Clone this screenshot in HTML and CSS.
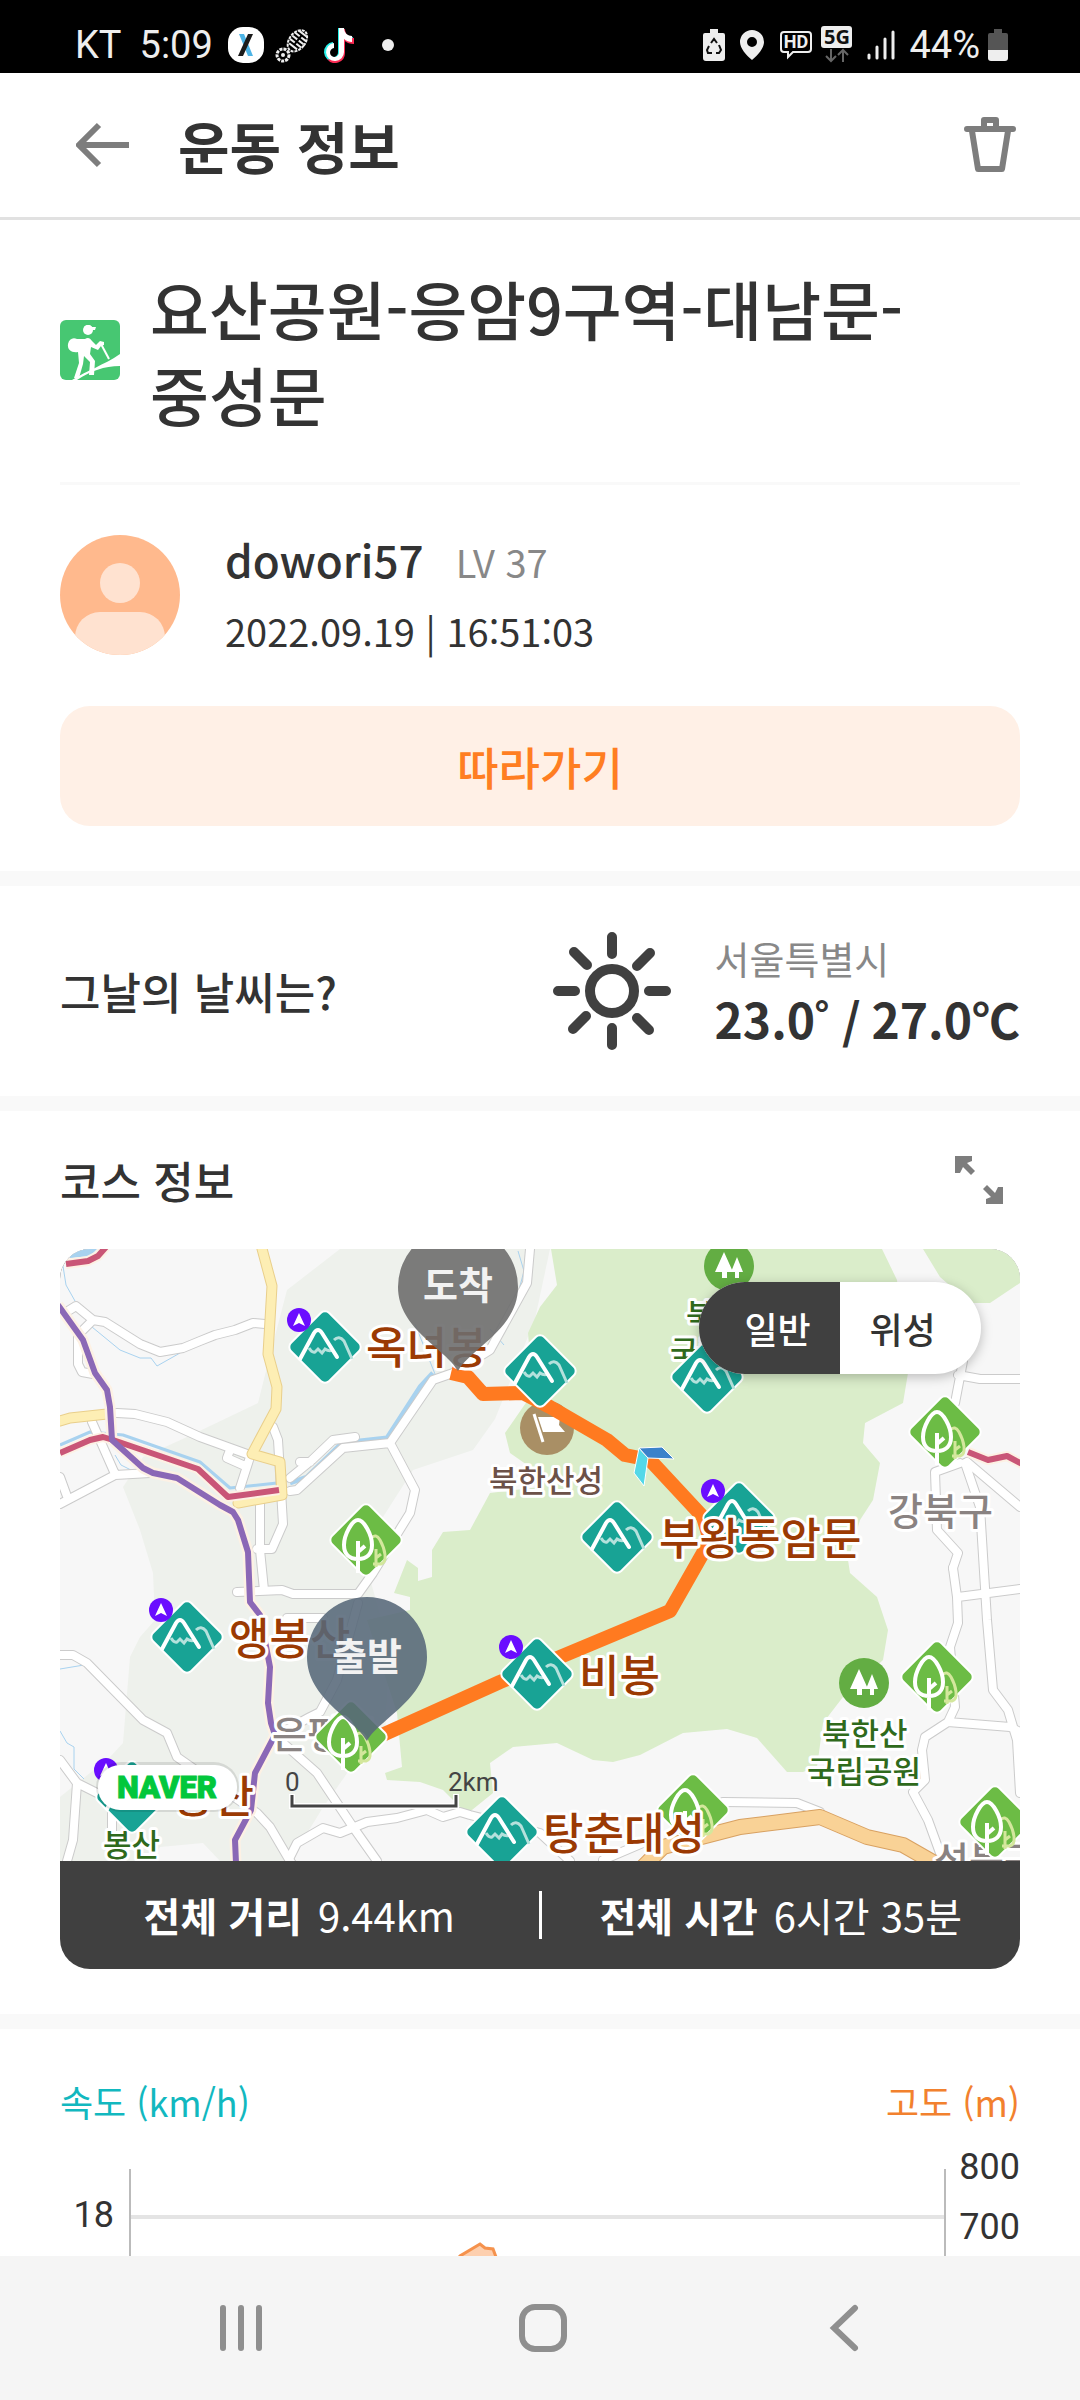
FILE: index.html
```html
<!DOCTYPE html>
<html lang="ko">
	<head>
		<meta charset="UTF-8">
		<meta name="viewport" content="width=device-width, initial-scale=1">
		<title>운동 정보</title>
		<link rel="stylesheet" href="styles.css">
	</head>
	<body>
		<div class="statusbar">
			<div class="status-left">
				<span>KT</span>
				<span class="time">5:09</span>
				<svg width="36" height="36" viewBox="0 0 36 36">
					<rect width="36" height="36" rx="15" fill="#fff"/>
					<path d="M11 7h5l9 22h-5z" fill="#4db4e6"/>
					<path d="M20 7h5L15 29h-5z" fill="#1b1b1b"/>
				</svg>
				<svg width="36" height="36" viewBox="0 0 36 36">
					<g transform="rotate(38 23 13)" stroke="#eee" fill="none">
						<ellipse cx="23" cy="14" rx="8" ry="12" stroke-width="2" stroke-dasharray="3 1"/>
						<path d="M18 5h10M16 9h6M24 9h6M16 13h6M24 13h6M16 17h6M24 17h6M18 21h10" stroke-width="2"/>
					</g>
					<circle cx="8" cy="28" r="6" fill="none" stroke="#eee" stroke-width="3" stroke-dasharray="3 1"/>
					<circle cx="8" cy="28" r="2" fill="#eee"/>
				</svg>
				<svg width="33" height="36" viewBox="0 0 33 36">
					<path d="M16 1h6c0 5 4 9 9 9v6c-4 0-7-1-9-3v12a10 10 0 1 1-11-10v6a4.500 4.500 0 1 0 5 4z" fill="#26f0ea"/>
					<path d="M18 2h5c0 5 4 9 9 9v6c-4 0-7-1-9-3v12a10 10 0 0 1-18 6c9 2 13-2 13-6z" fill="#fb2c54"/>
					<path d="M17 1h5c0 5 4 8 8 8v6c-3 0-6-1-8-3v13a9 9 0 1 1-10-9v5a4.500 4.500 0 1 0 5 4z" fill="#fff"/>
				</svg>
				<svg class="more" width="12" height="12" viewBox="0 0 12 12"><circle cx="6" cy="6" r="6" fill="#eee"/></svg>
			</div>
			<div class="status-right">
				<svg width="22" height="32" viewBox="0 0 22 32">
					<path d="M7 0h8v4h5a2 2 0 0 1 2 2v23a3 3 0 0 1-3 3H3a3 3 0 0 1-3-3V6a2 2 0 0 1 2-2h5z" fill="#eee"/>
					<path d="M8 14l3-4 3 4M16 16l2 5-2 3h-3M9 24H5l-1-3 2-4" fill="none" stroke="#111" stroke-width="2"/>
				</svg>
				<svg width="26" height="32" viewBox="0 0 26 32">
					<path d="M13 1a12 12 0 0 1 12 12c0 6-6 13-12 18C7 26 1 19 1 13A12 12 0 0 1 13 1zm0 7a5 5 0 1 0 0 10 5 5 0 0 0 0-10z" fill="#eee"/>
				</svg>
				<svg width="34" height="30" viewBox="0 0 34 30">
					<path d="M5 2h24a3 3 0 0 1 3 3v14a3 3 0 0 1-3 3H14l-5 5v-5H5a3 3 0 0 1-3-3V5a3 3 0 0 1 3-3z" fill="none" stroke="#eee" stroke-width="2"/>
					<text class="hd" x="17" y="18" text-anchor="middle">HD</text>
				</svg>
				<svg class="five" width="32" height="38" viewBox="0 0 32 38">
					<rect width="31" height="22" rx="3" fill="#eee"/>
					<text class="fiveg" x="16" y="18" text-anchor="middle">5G</text>
					<path d="M10 23v12M5 30l5 5 5-5M22 36V24M17 29l5-5 5 5" fill="none" stroke="#666" stroke-width="2"/>
				</svg>
				<svg width="28" height="30" viewBox="0 0 28 30">
					<path d="M2 25v3M10 17v11M18 9v19M26 2v26" stroke="#eee" stroke-width="3" stroke-linecap="round"/>
				</svg>
				<span>44%</span>
				<svg class="batt" width="20" height="32" viewBox="0 0 20 32">
					<path d="M6 0h8v4h4a2 2 0 0 1 2 2v15H0V6a2 2 0 0 1 2-2h4z" fill="#555"/>
					<path d="M0 21h20v8a3 3 0 0 1-3 3H3a3 3 0 0 1-3-3z" fill="#eee"/>
				</svg>
			</div>
		</div>

		<header class="header">
			<button class="iconbtn" aria-label="뒤로">
				<svg width="54" height="46" viewBox="0 0 54 46">
					<path d="M23 3L3 23l20 20M3 23h50" fill="none" stroke="#7d7d7d" stroke-width="6"/>
				</svg>
			</button>
			<h1>운동 정보</h1>
			<button class="iconbtn trash" aria-label="삭제">
				<svg width="52" height="56" viewBox="0 0 52 56">
					<g fill="none" stroke="#7d7d7d" stroke-width="6" stroke-linejoin="round" stroke-linecap="round">
						<path d="M3 12h46M20 11V3h12v8M8 14l6 38h24l6-38"/>
					</g>
				</svg>
			</button>
		</header>

		<main class="content">
			<section class="summary">
				<div class="coursename">
					<svg width="60" height="60" viewBox="0 0 60 60">
						<rect width="60" height="60" rx="6" fill="#47c772"/>
						<circle cx="28" cy="10" r="5" fill="#fff"/>
						<path d="M24 7c3-3 7-2 8 0h4l-1 3h-5z" fill="#fff"/>
						<path d="M25 19c3-2 5-1 7 2l4 4 4-4 4 1v3l-3 1-3 4-7-3-1 7 5 7-1 14h-5l1-13-6-6-1 8-4 14h-5l5-15-1-11c-6 1-11-2-10-8 1-5 5-7 9-5 3 0 5 0 8 0z" fill="#fff"/>
						<path d="M41 24l8 15" stroke="#fff" stroke-width="2"/>
						<path d="M12 60c8-5 16-9 23-12 9-5 17-8 25-14v12c-16 0-29 5-43 14z" fill="#fff"/>
					</svg>
					<h2>요산공원-응암9구역-대남문-중성문</h2>
				</div>
				<div class="profile">
					<svg width="120" height="120" viewBox="0 0 120 120">
						<clipPath id="face"><circle cx="60" cy="60" r="60"/></clipPath>
						<g clip-path="url(#face)">
							<rect width="120" height="120" fill="#ffb98d"/>
							<circle cx="60" cy="48" r="20" fill="#ffe2d0"/>
							<rect x="15" y="77" width="90" height="60" rx="25" fill="#ffe2d0"/>
						</g>
					</svg>
					<div class="who">
						<p><span class="name">dowori57</span><span class="level">LV 37</span></p>
						<p class="date">2022.09.19 | 16:51:03</p>
					</div>
				</div>
				<button class="follow">따라가기</button>
			</section>

			<section class="weather">
				<h3>그날의 날씨는?</h3>
				<svg width="118" height="118" viewBox="0 0 118 118">
					<g fill="none" stroke="#404040" stroke-width="10" stroke-linecap="round">
						<circle cx="59" cy="59" r="22"/>
						<path d="M59 5v17M59 96v17M5 59h17M96 59h17M21 20l13 13M97 21L84 34M20 97l13-13M96 98L84 86"/>
					</g>
				</svg>
				<div class="degree">
					<p class="city">서울특별시</p>
					<p class="temp">23.0˚ / 27.0℃</p>
				</div>
			</section>

			<section class="course">
				<div class="coursehead">
					<h3>코스 정보</h3>
					<button class="iconbtn" aria-label="크게 보기">
						<svg width="50" height="50" viewBox="0 0 50 50">
							<path d="M1 1h17v5l-5 2 8 8-4 4-8-8-3 6H1zM49 49H32v-5l5-2-8-8 4-4 8 8 3-6h5z" fill="#7d7d7d"/>
						</svg>
					</button>
				</div>
				<div class="card">
					<svg class="map" viewBox="0 0 960 612" role="img" aria-label="코스 지도">
						<defs>
							<g id="mountain">
								<rect x="-27" y="-27" width="54" height="54" rx="6" transform="rotate(45)" fill="#18a395" stroke="#fff" stroke-width="2"/>
								<path d="M-16 1q3 5 6 4l3-3 4 4 3-4q4 3 8 1M9-7q5-5 10 1l8 18" fill="none" stroke="#b5e1dc" stroke-width="3"/>
								<path d="M-25 12L-11-14q4-6 8 0L12 10" fill="none" stroke="#fff" stroke-width="4" stroke-linecap="round"/>
							</g>
							<g id="badge">
								<circle cx="-26" cy="-27" r="12" fill="#6a0dff"/>
								<path d="M-26-34l6 13-6-3-6 3z" fill="#fff"/>
							</g>
							<g id="tree">
								<rect x="-27" y="-27" width="54" height="54" rx="6" transform="rotate(45)" fill="#6cbc45" stroke="#fff" stroke-width="2"/>
								<path d="M5-2q5-5 9 2c5 9 8 22 1 24h-8M10 9v18M10 18l5-4" fill="none" stroke="#d3e79c" stroke-width="3"/>
								<path d="M-8-20c-6 0-14 15-14 25 0 9 5 14 14 14S6 14 6 5c0-10-8-25-14-25zM-8 1v32M-8 12l7-6" fill="none" stroke="#fff" stroke-width="4"/>
							</g>
							<g id="park">
								<circle r="25" fill="#63ad43"/>
								<path d="M-5-14l9 20h-6v6h-5V6h-7zM8-9L14 6h-4v6H6V6H2z" fill="#fff"/>
							</g>
							<!-- white roads, drawn twice: casing and fill -->
							<g id="roads">
								<path d="M8 62l8-5 17 14 12 2 35 22 20 8 23-4 17-7 15-6 20-5 18-7 12 1M33 71L20 84M18 85v30l4 8 11 2"/>
								<path d="M57 164l18 1 32 8 33 15 47 17M32 173l23 52M0 255l55-29 35-2M0 228l8 22"/>
								<path d="M170 201l-3 8 18 8M190 208l-10 31M213 178l5 13 5 84-11 25h-15M200 251v50l4 40"/>
								<path d="M177 343l45-2 11 4h65l15-21 37-60 5-23-25-47 43-63 20-7 37-23 37-67 3-34M330 194l-47 5-46 42-7 1M230 229l22-18 21-20 22-3M240 213l10 0"/>
								<path d="M0 406h13l14 8 56 57 24 13 10 24 80 56 13 14 20 34 12 16M0 511l17 23 20 10M17 534l-4 57-6 21M52 564v30"/>
								<path d="M217 486l33-18 10-5 17-32 21-77M223 494l34 30 36 54 24 34M230 608l7-14 26-15 17 5 27-11 30-4 30-8 16 7 17-5 10 3 70 18 30 28M227 369h36M543 611l54-23"/>
								<path d="M663 553l74 1 23 9M893 319l4 29 1 26-8 24 5 60-7 15-23 15-3 13 3 30-12 12 15 28 12 33M888 473l62 5 10 5M905 214l15 44 7 113 6 70 15 20 9 30 3 53M898 348l62-8"/>
								<path d="M903 112l-8 42M898 126l22 4h40M900 214l-25 9 2 58 21 23-5 15M907 213l53 45"/>
							</g>
							<path id="pin" d="M0 84C-12 62-60 42-60 0a60 60 0 0 1 120 0C60 42 12 62 0 84z"/>
						</defs>
						<rect width="960" height="612" fill="#f7f7f7"/>
						<path d="M280 0l-53 41-20 77-9 36-71 34-44 20-20 30 17 43 13 43 2 47-15 17-10 20-7 86-13 14-50 40v64h90l10-14 43-4 17 18h70l32-52 28-40 35-35 5-85-20-70 13-62 30-47 60-20 22-31 30-75 10-25 15-70z" fill="#eef1ec"/>
						<path d="M491 0l6 36-17 22-12 26 5 60-10 14-18 26 5 20 20 14 10 20-50 6-20 37-27 2-11 18v27l-14 4v-13l-11-8-13 33 16 4v13l-43 10 30 93 5 54-17 6 2 7 33 2 23 8 24 24 26-21-3-30 23-16 44-4 36 17 20 2 27-7 43-22 44-4 30 9 30 34h16l14-5 6-44 10-13 10-13 40-37 5-30-11-33-27-24-2-13 12-40 13-20 7-37-17-20 2-20 38-20 5-30-11-93-15-31zM863 0l17 28 30 26h20l30-20V0z" fill="#daedca"/>
						<g fill="none" stroke="#a8d2ef" stroke-linejoin="round">
							<path d="M230 234l17-6 33-32 20-4 27-3 33-51 13-14" stroke-width="5"/>
							<path d="M0 196l30-13 33 3 77 27 30 26 47-5" stroke-width="3"/>
							<path d="M32 78l28 23 20 8h11l6 8 23-13M3 17l3 19 9 16M55 206l6 10 12 6M0 420l24-4M0 482l7 12 7 4v22l10 10M458 2l6 20-8 30-12 30M355 75l20 50M430 80l14 16" stroke-width="1"/>
						</g>
						<path d="M10 0h27l-7 7-20 2z" fill="#a8d2ef"/>
						<g fill="none" stroke-linejoin="round" stroke-linecap="round">
							<use href="#roads" stroke="#cbcbcb" stroke-width="10"/>
							<use href="#roads" stroke="#fff" stroke-width="8"/>
							<path d="M0 172l10-3 37-4M201-4l11 41-4 68 9 33-1 22-24 45 28 8 2 33-44 8" stroke="#e9cf8b" stroke-width="11"/>
							<path d="M0 172l10-3 37-4M201-4l11 41-4 68 9 33-1 22-24 45 28 8 2 33-44 8" stroke="#fdeeb4" stroke-width="9"/>
							<path d="M583 618l20-20 77-20 80-10 47 20 36 8 35 20" stroke="#d8a162" stroke-width="16"/>
							<path d="M583 618l20-20 77-20 80-10 47 20 36 8 35 20" stroke="#f9d296" stroke-width="14"/>
						</g>
						<g fill="none" stroke-linejoin="round">
							<path d="M6 15l22-3 10-5 8-9M0 204l30-13 13-3 10 3 85 29 30 28 51-7M908 203l20 8 19-4 15 8" stroke="#fdf1e4" stroke-width="10"/>
							<path d="M-2 56l25 35 12 33 12 17 3 17 2 33 31 28 10 5 24 5 43 27 13 7 5 8 10 32 2 50 10 13 10 52-2 36 3 20 4 12-20 38-4 37-16 30 1 23" stroke="#fdf1e4" stroke-width="11"/>
							<path d="M6 15l22-3 10-5 8-9M0 204l30-13 13-3 10 3 85 29 30 28 51-7M908 203l20 8 19-4 15 8" stroke="#c95677" stroke-width="6"/>
							<path d="M-2 56l25 35 12 33 12 17 3 17 2 33 31 28 10 5 24 5 43 27 13 7 5 8 10 32 2 50 10 13 10 52-2 36 3 20 4 12-20 38-4 37-16 30 1 23" stroke="#8b68b6" stroke-width="6"/>
						</g>

						<use href="#park" x="669" y="17"/>
						<use href="#park" x="804" y="434"/>
						<circle cx="487" cy="179" r="27" fill="#a98f65"/>
						<path d="M474 165l9 28" stroke="#fff" stroke-width="3"/>
						<path d="M478 168h22l-1 8 6 7h-22z" fill="#fff"/>
						<g class="label place">
							<text x="828" y="276">강북구</text>
							<text x="212" y="499">은평구</text>
							<text x="874" y="625">성북구</text>
						</g>
						<g class="label green">
							<text x="626" y="77">북한산</text>
							<text x="610" y="114">국립공원</text>
							<text x="762" y="496">북한산</text>
							<text x="747" y="534">국립공원</text>
							<text x="43" y="607">봉산</text>
						</g>
						<text class="label fort" x="429" y="243">북한산성</text>
						<path d="M391 124l17 4 15 17 40-1 27 14 57 33 18 15 25 5 53 57 6 20-6 16-33 58-110 46-60 25-120 54" fill="none" stroke="#ff7a20" stroke-width="14" stroke-linejoin="round"/>
						<path d="M579 199l-5 25 10 13 4-28z" fill="#54d8e8" stroke="#fff"/>
						<path d="M579 199l23-1 12 12-26-1z" fill="#3b82cb" stroke="#fff"/>

						<use href="#mountain" x="265" y="98"/><use href="#badge" x="265" y="98"/>
						<use href="#mountain" x="480" y="122"/>
						<use href="#mountain" x="647" y="128"/>
						<use href="#mountain" x="679" y="269"/><use href="#badge" x="679" y="269"/>
						<use href="#mountain" x="557" y="288"/>
						<use href="#mountain" x="127" y="388"/><use href="#badge" x="127" y="388"/>
						<use href="#mountain" x="477" y="425"/><use href="#badge" x="477" y="425"/>
						<use href="#mountain" x="72" y="548"/><use href="#badge" x="72" y="548"/>
						<use href="#mountain" x="442" y="583"/>
						<use href="#tree" x="306" y="291"/>
						<use href="#tree" x="885" y="183"/>
						<use href="#tree" x="291" y="488"/>
						<use href="#tree" x="877" y="428"/>
						<use href="#tree" x="633" y="561"/>
						<use href="#tree" x="935" y="573"/>
						<g class="label peak">
							<text x="306" y="115">옥녀봉</text>
							<text x="599" y="306">부왕동암문</text>
							<text x="169" y="406">앵봉산</text>
							<text x="519" y="443">비봉</text>
							<text x="483" y="601">탕춘대성</text>
							<text x="113" y="564">봉산</text>
						</g>
						<use href="#pin" x="398" y="38" fill="#6e6e6e" fill-opacity=".9"/>
						<use href="#pin" x="307" y="408" fill="#566879" fill-opacity=".88"/>
						<text class="pintext" x="398" y="50" text-anchor="middle">도착</text>
						<text class="pintext" x="307" y="421" text-anchor="middle">출발</text>

						<path d="M232 545v12h164v-12" fill="none" stroke="#fff" stroke-width="6"/>
						<path d="M232 546v11h164v-11" fill="none" stroke="#444" stroke-width="3"/>
						<text class="scale" x="225" y="542">0</text>
						<text class="scale" x="388" y="542">2km</text>
						<rect x="36" y="513" width="143" height="50" rx="25" fill="#000" opacity=".1"/>
						<rect x="38" y="516" width="139" height="45" rx="22" fill="#fff"/>
						<text class="naver" x="107" y="549" text-anchor="middle">NAVER</text>
					</svg>
					<div class="toggle">
						<button class="current">일반</button>
						<button>위성</button>
					</div>
					<div class="totals">
						<p><b>전체 거리</b><span>9.44km</span></p>
						<p><b>전체 시간</b><span>6시간 35분</span></p>
					</div>
				</div>
			</section>

			<section class="chart">
				<div class="legend">
					<span class="speed">속도 (km/h)</span>
					<span class="height">고도 (m)</span>
				</div>
				<svg class="plot" viewBox="0 0 960 240" role="img" aria-label="속도와 고도 그래프">
					<path d="M70 91h815" stroke="#e4e4e4" stroke-width="4"/>
					<path d="M380 154l20-24 20-12 5 4 8 1 3 8 20 40v70h-76z" fill="#fdcfae"/>
					<path d="M380 154l20-24 20-12 5 4 8 1 3 8 20 40" fill="none" stroke="#f5924d" stroke-width="3"/>
					<path d="M70 43v197M885 43v197" stroke="#bbb" stroke-width="2"/>
					<text x="54" y="101" text-anchor="end">18</text>
					<text x="960" y="53" text-anchor="end">800</text>
					<text x="960" y="113" text-anchor="end">700</text>
				</svg>
			</section>
		</main>

		<nav class="navbar">
			<button class="iconbtn" aria-label="최근 앱">
				<svg width="48" height="48" viewBox="0 0 48 48">
					<path d="M6 4v40M24 4v40M42 4v40" stroke="#8f8f8f" stroke-width="6" stroke-linecap="round"/>
				</svg>
			</button>
			<button class="iconbtn" aria-label="홈">
				<svg width="48" height="48" viewBox="0 0 48 48">
					<rect x="3" y="3" width="42" height="42" rx="13" fill="none" stroke="#8f8f8f" stroke-width="6"/>
				</svg>
			</button>
			<button class="iconbtn" aria-label="이전">
				<svg width="48" height="48" viewBox="0 0 48 48">
					<path d="M34 4L13 24l21 20" fill="none" stroke="#8f8f8f" stroke-width="6" stroke-linecap="round"/>
				</svg>
			</button>
		</nav>
	</body>
</html>
```
FILE: styles.css
```css
*{box-sizing:border-box;}
body,h1,h2,h3,p{
	margin:0;
	padding:0;
}
body{
	display:flex;
	flex-direction:column;
	height:100vh;
	background-color:#fff;
	color:#333;
	font-family:"Noto Sans CJK KR",sans-serif;
}
svg{
	display:block;
	flex-shrink:0;
}
button{
	border:0;
	padding:0;
	background:none;
	color:inherit;
	font-family:inherit;
	cursor:pointer;
}

/* 상태바 */
.statusbar{
	display:flex;
	justify-content:space-between;
	height:73px;
	padding:15px 72px 0 75px;
	background-color:#000;
	color:#eee;
	font:38px/60px Roboto,sans-serif;
}
.status-left,.status-right{
	display:flex;
	align-items:center;
	height:60px;
}
.status-left{gap:11px;}
.status-left .time{margin:0 4px 0 7px;}
.status-left .more{margin-left:16px;}
.status-right{gap:14px;}
.status-right .five{margin-left:-6px;}
.status-right .batt{margin-left:-6px;}
.hd{
	font:bold 18px Roboto,sans-serif;
	fill:#eee;
}
.fiveg{
	font:bold 20px "Noto Sans",sans-serif;
	fill:#111;
}

/* 헤더 */
.header{
	display:flex;
	align-items:center;
	height:147px;
	padding:0 64px 0 76px;
	border-bottom:3px solid #e1e1e1;
}
.header h1{
	flex:1;
	margin-left:48px;
	font-size:56px;
	font-weight:700;
	line-height:80px;
}

.content{
	flex:1;
	min-height:0;
	overflow-y:auto;
	scrollbar-width:none;
}
.content section{
	padding:0 60px;
	border-bottom:15px solid #f9f9f9;
}
h3{
	font-size:44px;
	font-weight:500;
	line-height:64px;
}

.summary .coursename{
	display:flex;
	align-items:center;
	gap:30px;
	padding:44px 0 46px;
	border-bottom:3px solid #f9f9f9;
}
.coursename h2{
	font-size:64px;
	font-weight:500;
	line-height:86px;
	word-break:keep-all;
}
.profile{
	display:flex;
	align-items:center;
	gap:45px;
	height:120px;
	margin-top:50px;
}
.who p{
	display:flex;
	align-items:baseline;
	height:72px;
	line-height:72px;
}
.who .name{
	font-size:44px;
	font-weight:500;
}
.who .level{
	margin-left:32px;
	font-size:38px;
	color:#888;
}
.who .date{font-size:38px;}
.follow{
	display:block;
	width:100%;
	height:120px;
	margin:51px 0 45px;
	border-radius:30px;
	background-color:#fff0e6;
	color:#ff7e22;
	font-size:45px;
	font-weight:500;
}

.weather{
	display:flex;
	align-items:center;
	height:225px;
}
.weather h3{flex:1;}
.weather .degree{margin-left:44px;}
.weather .city{
	font-size:38px;
	line-height:54px;
	color:#888;
}
.weather .temp{
	font-size:48px;
	font-weight:700;
	line-height:66px;
}

.coursehead{
	display:flex;
	align-items:center;
	justify-content:space-between;
	height:138px;
	padding-right:16px;
}
.card{
	position:relative;
	margin-bottom:45px;
	border-radius:30px;
	overflow:hidden;
	background-color:#404040;
}
.map{
	width:100%;
	height:auto;
}
.label{
	font-weight:500;
	stroke:#fff;
	stroke-width:6px;
	stroke-linejoin:round;
	paint-order:stroke;
}
.label.place{
	font-size:38px;
	fill:#8a8382;
}
.label.green{
	font-size:31px;
	fill:#2f6a1c;
}
.label.fort{
	font-size:31px;
	fill:#6c5148;
}
.label.peak{
	font-size:44px;
	fill:#9b3a03;
}
.pintext{
	font-size:38px;
	font-weight:700;
	fill:#f2f2f2;
}
.scale{
	font:26px Roboto,sans-serif;
	fill:#444;
}
.naver{
	font:900 31px Roboto,sans-serif;
	fill:#03c73c;
	stroke:#03c73c;
	stroke-width:1px;
}
.toggle{
	position:absolute;
	top:33px;
	right:39px;
	display:flex;
	height:92px;
	border-radius:46px;
	overflow:hidden;
	background-color:#fff;
	box-shadow:0 3px 12px rgba(0,0,0,.25);
}
.toggle button{
	width:141px;
	padding-right:16px;
	font-size:36px;
	font-weight:500;
}
.toggle .current{
	padding:0 0 0 16px;
	background-color:#404040;
	color:#fff;
}
.totals{
	display:flex;
	align-items:center;
	height:108px;
	color:#fff;
	font-size:40px;
	line-height:48px;
}
.totals p{
	flex:1;
	display:flex;
	justify-content:center;
	gap:16px;
}
.totals p + p{border-left:3px solid #fff;}

.chart .legend{
	display:flex;
	justify-content:space-between;
	padding-top:47px;
	font-size:36px;
	line-height:50px;
}
.legend .speed{color:#12b8bf;}
.legend .height{color:#f2812e;}
.plot{
	width:100%;
	height:auto;
}
.plot text{
	font:36px Roboto,sans-serif;
	fill:#333;
}

.navbar{
	display:flex;
	align-items:center;
	justify-content:space-around;
	height:144px;
	padding:0 84px 0 90px;
	background-color:#f5f5f5;
}
```
